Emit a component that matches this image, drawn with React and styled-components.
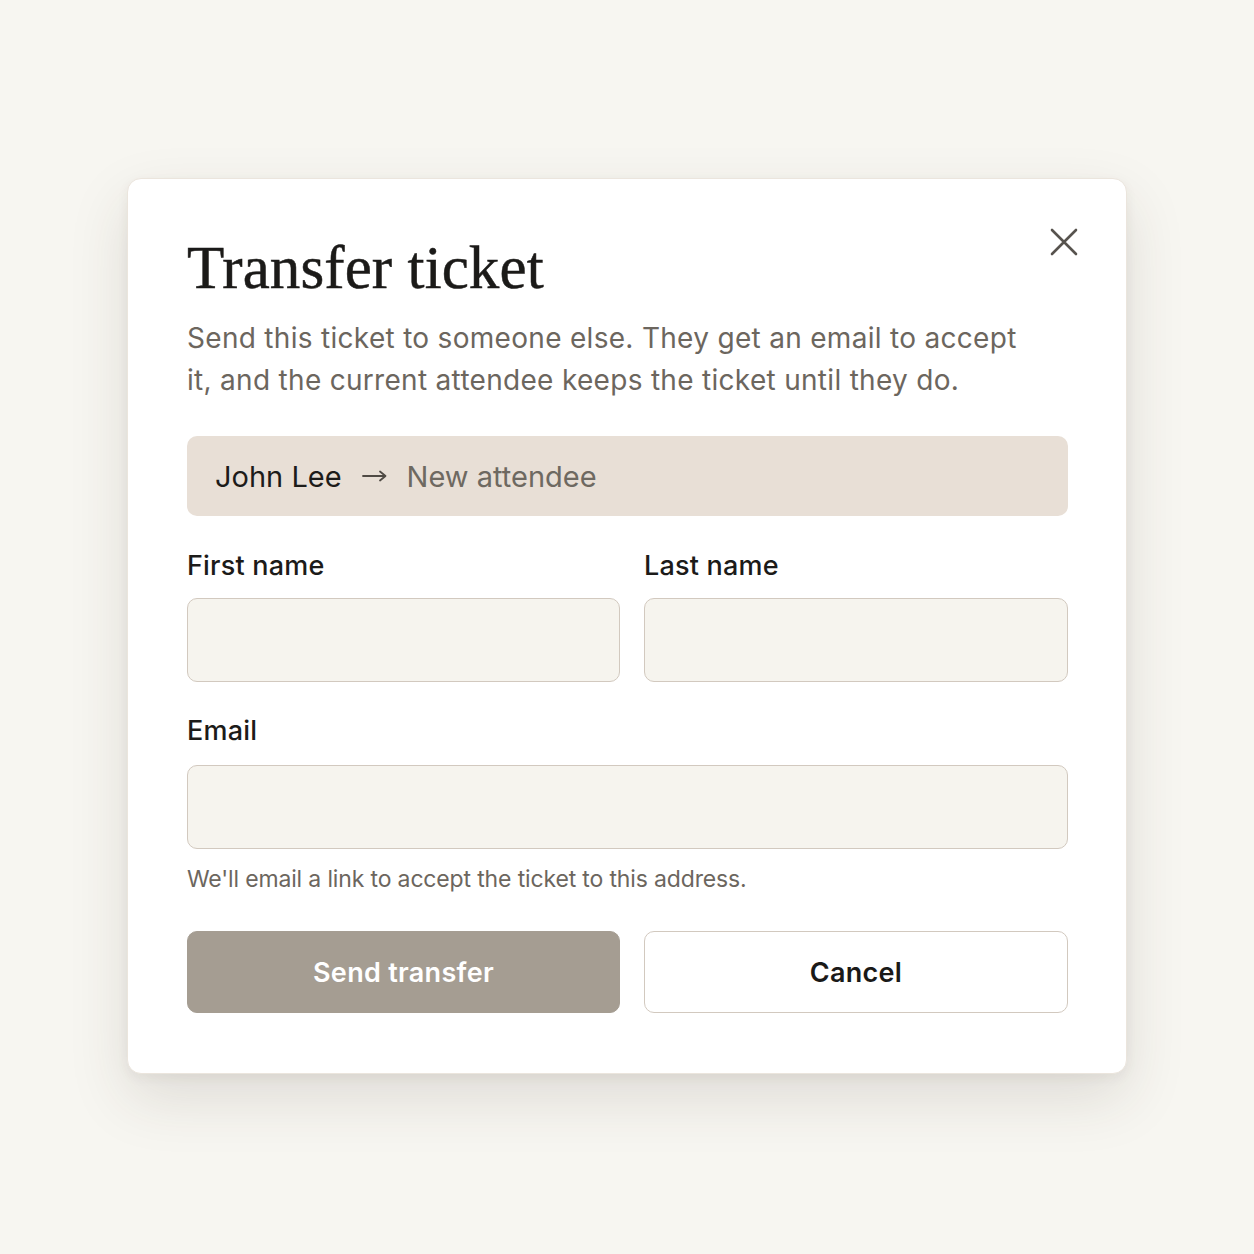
import styled, { createGlobalStyle } from "styled-components";

const GlobalStyle = createGlobalStyle`
  html, body {
    margin: 0;
    padding: 0;
    background: #f7f6f1;
  }
  body {
    font-family: Inter, "Noto Sans", sans-serif;
  }
  * {
    box-sizing: border-box;
  }
`;

const Page = styled.div`
  min-height: 1254px;
  padding-top: 178px;
  padding-left: 127px;
`;

const Card = styled.div`
  position: relative;
  width: 1000px;
  background: #ffffff;
  border: 1px solid #ebe5dd;
  border-radius: 14px;
  box-shadow: 0 24px 60px rgba(60, 50, 40, 0.13), 0 4px 12px rgba(60, 50, 40, 0.06);
  padding: 56px 58px 60px 59px;
`;

const CloseButton = styled.button`
  position: absolute;
  top: 49px;
  right: 48px;
  width: 28px;
  height: 28px;
  padding: 0;
  border: 0;
  background: none;
  cursor: pointer;
  display: flex;
  align-items: center;
  justify-content: center;
`;

const Title = styled.h1`
  margin: 0;
  font-family: "Liberation Serif", "Times New Roman", serif;
  font-weight: 400;
  font-size: 61px;
  line-height: 66px;
  letter-spacing: 0.1px;
  color: #1b1a18;
  -webkit-text-stroke: 0.5px #1b1a18;
`;

const Description = styled.p`
  margin: 16px 0 0;
  font-size: 28px;
  line-height: 42px;
  letter-spacing: 0.3px;
  color: #6c665e;
  max-width: 850px;
`;

const Banner = styled.div`
  margin-top: 35px;
  height: 80px;
  border-radius: 10px;
  background: #e8dfd6;
  display: flex;
  align-items: center;
  padding: 0 28px;
  font-size: 29px;
  gap: 20px;
`;

const From = styled.span`
  color: #1d1c1a;
`;

const To = styled.span`
  color: #6e6961;
`;

const Row = styled.div`
  display: grid;
  grid-template-columns: 433px 1fr;
  column-gap: 24px;
  margin-top: ${({ $top }) => $top}px;
`;

const Field = styled.div`
  display: flex;
  flex-direction: column;
`;

const Label = styled.label`
  font-size: 27px;
  line-height: 32px;
  font-weight: 500;
  letter-spacing: 0.2px;
  color: #1c1b19;
  margin-bottom: ${({ $gap }) => $gap}px;
`;

const Input = styled.input`
  height: 84px;
  width: 100%;
  border: 1.5px solid #d2c9bf;
  border-radius: 10px;
  background: #f6f4ee;
  padding: 0 22px;
  font-family: inherit;
  font-size: 26px;
  color: #1c1b19;
  outline: none;
`;

const EmailBlock = styled.div`
  margin-top: 33px;
  display: flex;
  flex-direction: column;
`;

const Hint = styled.p`
  margin: 15px 0 0;
  font-size: 23px;
  line-height: 30px;
  color: #6c665e;
  letter-spacing: -0.15px;
`;

const Button = styled.button`
  height: 82px;
  border-radius: 10px;
  font-family: inherit;
  font-size: 27px;
  font-weight: 600;
  letter-spacing: 0.3px;
  cursor: pointer;
  border: 1.5px solid ${({ $primary }) => ($primary ? "#a59d92" : "#d2c9bf")};
  background: ${({ $primary }) => ($primary ? "#a59d92" : "#ffffff")};
  color: ${({ $primary }) => ($primary ? "#ffffff" : "#1a1918")};
`;

const CloseIcon = () => (
  <svg width="28" height="28" viewBox="0 0 28 28" fill="none">
    <path
      d="M2 2L26 26M26 2L2 26"
      stroke="#57534e"
      strokeWidth="2.6"
      strokeLinecap="round"
    />
  </svg>
);

// thin long arrow between the current and the new attendee
const ArrowIcon = () => (
  <svg width="25" height="12" viewBox="0 0 25 12" fill="none">
    <path
      d="M1 6H23M18 1.5L23.5 6L18 10.5"
      stroke="#4f4a44"
      strokeWidth="1.8"
      strokeLinecap="round"
      strokeLinejoin="round"
    />
  </svg>
);

export default function App() {
  return (
    <>
      <GlobalStyle />
      <Page>
        <Card>
          <CloseButton aria-label="Close">
            <CloseIcon />
          </CloseButton>
          <Title>Transfer ticket</Title>
          <Description>
            Send this ticket to someone else. They get an email to accept it,
            and the current attendee keeps the ticket until they do.
          </Description>

          <Banner>
            <From>John Lee</From>
            <ArrowIcon />
            <To>New attendee</To>
          </Banner>

          <Row $top={34}>
            <Field>
              <Label $gap={16}>First name</Label>
              <Input />
            </Field>
            <Field>
              <Label $gap={16}>Last name</Label>
              <Input />
            </Field>
          </Row>

          <EmailBlock>
            <Label $gap={18}>Email</Label>
            <Input />
            <Hint>We'll email a link to accept the ticket to this address.</Hint>
          </EmailBlock>

          <Row $top={37}>
            <Button $primary>Send transfer</Button>
            <Button>Cancel</Button>
          </Row>
        </Card>
      </Page>
    </>
  );
}
